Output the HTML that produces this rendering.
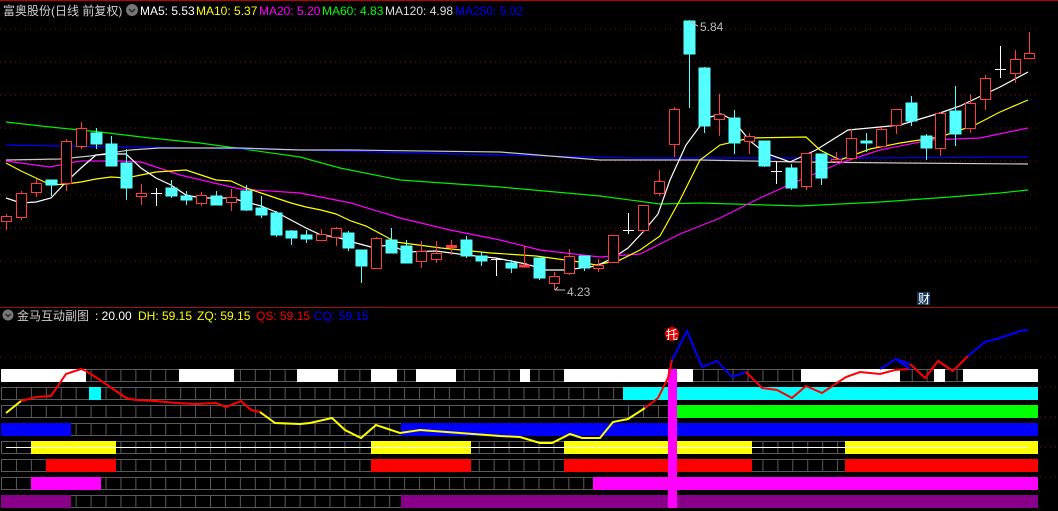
<!DOCTYPE html><html><head><meta charset="utf-8"><style>
html,body{margin:0;padding:0;background:#000;width:1058px;height:511px;overflow:hidden}
svg{display:block}
text{font-family:"Liberation Sans","Noto Sans CJK SC",sans-serif;font-size:12px}
</style></head><body>
<svg width="1058" height="511" viewBox="0 0 1058 511">
<defs>
<pattern id="cell" patternUnits="userSpaceOnUse" x="1" y="0" width="14.93" height="511">
<rect x="0.5" y="0" width="14.43" height="511" fill="#000"/>
<line x1="0.5" y1="0" x2="0.5" y2="511" stroke="#5a5a5a"/>
</pattern>
</defs>
<rect width="1058" height="511" fill="#000"/>
<line x1="0" y1="0.5" x2="1058" y2="0.5" stroke="#b00"/>
<g stroke="#8a1010" stroke-dasharray="1 4">
<line x1="0" y1="29" x2="1040" y2="29"/><line x1="0" y1="62" x2="1040" y2="62"/><line x1="0" y1="95" x2="1040" y2="95"/><line x1="0" y1="128" x2="1040" y2="128"/><line x1="0" y1="161" x2="1040" y2="161"/><line x1="0" y1="195" x2="1040" y2="195"/><line x1="0" y1="228" x2="1040" y2="228"/><line x1="0" y1="261" x2="1040" y2="261"/>
<line x1="0" y1="357" x2="1058" y2="357"/><line x1="1040" y1="387" x2="1058" y2="387"/><line x1="1040" y1="417" x2="1058" y2="417"/><line x1="1040" y1="447" x2="1058" y2="447"/><line x1="1040" y1="477" x2="1058" y2="477"/>
</g>
<line x1="0" y1="307.5" x2="1058" y2="307.5" stroke="#a01010"/>

<!-- header -->
<text x="3" y="15" fill="#d0d0d0" font-size="13">富奥股份(日线 前复权)</text>
<circle cx="132" cy="10" r="6" fill="#777"/><path d="M129 9 l3 3 l3 -3" stroke="#222" fill="none" stroke-width="1.3"/>
<text x="140" y="15" fill="#fff">MA5: 5.53</text>
<text x="196" y="15" fill="#ffff00">MA10: 5.37</text>
<text x="259" y="15" fill="#ff00ff">MA20: 5.20</text>
<text x="322" y="15" fill="#00ff00">MA60: 4.83</text>
<text x="385" y="15" fill="#ddd">MA120: 4.98</text>
<text x="455" y="15" fill="#0000ff">MA250: 5.02</text>

<!-- MA lines -->
<g fill="none" stroke-width="1.2">
<polyline stroke="#00ee00" points="6,122 50,127 100,132 150,138 200,143 250,150 300,157 340,168 400,180 500,187 600,196 660,204 700,203 800,206 880,202 950,197 1000,193 1028,190"/>
<polyline stroke="#0000ff" points="6,145 60,146 200,148 300,150 500,155 640,158 860,158 1028,157"/>
<polyline stroke="#c8c8c8" points="6,160 60,159 90,156 130,150 160,148 240,148 300,150 350,150 500,152 600,160 700,160 800,162 900,163 1028,164"/>
<polyline stroke="#ff00ff" points="6,161 50,167 80,161 120,161 141,162 180,175 240,189 300,193 351,203 400,218 450,230 500,240 540,250 600,257 640,254 680,234 720,218 760,198 800,180 840,163 880,150 930,140 980,138 1028,128"/>
<polyline stroke="#ffff00" points="6,163 21,171 36,178 51,185 66,184 81,182 96,179 111,177 126,178 141,175 156,172 171,171 186,170 201,175 216,180 231,181 246,188 261,193 276,198 291,203 306,207 321,210 336,214 351,221 366,226 396,242 441,248 491,253 536,256 580,262 596,265 620,260 640,250 660,236 680,200 700,160 720,145 750,138 806,137 820,150 840,160 870,149 900,143 940,137 975,125 1000,112 1028,100"/>
<polyline stroke="#ffffff" points="6,198 21,203 36,202 51,198 66,182 81,168 96,155 111,154 126,154 141,168 156,178 171,185 186,195 201,198 231,198 246,202 261,206 276,212 291,220 306,228 321,235 336,237 356,243 371,247 391,245 406,252 436,251 466,255 496,258 526,264 546,270 566,270 596,266 613,258 628,248 643,232 658,214 670,180 686,145 700,126 710,117 721,114 733,120 750,141 765,153 790,162 816,150 848,130 880,127 900,125 940,113 960,106 1000,87 1028,72"/>
</g>

<!-- candles: red hollow -->
<g stroke="#ff3c3c" fill="#000" stroke-width="1">
<line x1="6.5" y1="214" x2="6.5" y2="230"/><rect x="1.5" y="216.5" width="10" height="5"/>
<line x1="21.5" y1="191" x2="21.5" y2="220"/><rect x="16.5" y="193.5" width="10" height="24"/>
<line x1="36.5" y1="179" x2="36.5" y2="197"/><rect x="31.5" y="183.5" width="10" height="9"/>
<line x1="66.5" y1="139" x2="66.5" y2="191"/><rect x="61.5" y="141.5" width="10" height="42"/>
<line x1="81.5" y1="122" x2="81.5" y2="149"/><rect x="76.5" y="128.5" width="10" height="18"/>
<line x1="141.5" y1="184" x2="141.5" y2="205"/><rect x="136.5" y="193.5" width="10" height="3"/>
<line x1="201.5" y1="192" x2="201.5" y2="206"/><rect x="196.5" y="195.5" width="10" height="8"/>
<line x1="231.5" y1="189" x2="231.5" y2="211"/><rect x="226.5" y="197.5" width="10" height="5"/>
<line x1="321.5" y1="229" x2="321.5" y2="241"/><rect x="316.5" y="234.5" width="10" height="6"/>
<line x1="336.5" y1="227" x2="336.5" y2="246"/><rect x="331.5" y="228.5" width="10" height="9"/>
<line x1="376.5" y1="237" x2="376.5" y2="268"/><rect x="371.5" y="238.5" width="10" height="30"/>
<line x1="421.5" y1="241" x2="421.5" y2="268"/><rect x="416.5" y="251.5" width="10" height="10"/>
<line x1="436.5" y1="241" x2="436.5" y2="263"/><rect x="431.5" y="253.5" width="10" height="6"/>
<line x1="451.5" y1="240" x2="451.5" y2="255"/><rect x="446.5" y="245.5" width="10" height="2" fill="#ff3c3c"/>
<line x1="524.5" y1="246" x2="524.5" y2="268"/><rect x="519.5" y="265" width="10" height="2" fill="#ff3c3c"/>
<line x1="554.5" y1="272" x2="554.5" y2="290"/><rect x="549.5" y="276.5" width="10" height="7"/>
<line x1="569.5" y1="249" x2="569.5" y2="275"/><rect x="564.5" y="256.5" width="10" height="17"/>
<line x1="598.5" y1="259" x2="598.5" y2="272"/><rect x="593.5" y="265.5" width="10" height="3"/>
<rect x="608.5" y="235.5" width="10" height="27"/>
<line x1="643.5" y1="205" x2="643.5" y2="232"/><rect x="638.5" y="205.5" width="10" height="25"/>
<line x1="659.5" y1="170" x2="659.5" y2="196"/><rect x="654.5" y="181.5" width="10" height="12"/>
<line x1="674.5" y1="107" x2="674.5" y2="157"/><rect x="669.5" y="109.5" width="10" height="35"/>
<line x1="719.5" y1="94" x2="719.5" y2="136"/><rect x="714.5" y="114.5" width="10" height="5"/>
<line x1="749.5" y1="133" x2="749.5" y2="154"/><rect x="744.5" y="136.5" width="10" height="5"/>
<line x1="806.5" y1="153" x2="806.5" y2="190"/><rect x="801.5" y="153.5" width="10" height="33"/>
<line x1="836.5" y1="152" x2="836.5" y2="163"/><rect x="831.5" y="159.5" width="10" height="2"/>
<line x1="851.5" y1="129" x2="851.5" y2="160"/><rect x="846.5" y="138.5" width="10" height="20"/>
<line x1="881.5" y1="127" x2="881.5" y2="147"/><rect x="876.5" y="129.5" width="10" height="17"/>
<line x1="896.5" y1="109" x2="896.5" y2="134"/><rect x="891.5" y="109.5" width="10" height="16"/>
<line x1="940.5" y1="112" x2="940.5" y2="156"/><rect x="935.5" y="113.5" width="10" height="35"/>
<line x1="970.5" y1="94" x2="970.5" y2="133"/><rect x="965.5" y="103.5" width="10" height="25"/>
<line x1="985.5" y1="75" x2="985.5" y2="110"/><rect x="980.5" y="78.5" width="10" height="21"/>
<line x1="1015.5" y1="50" x2="1015.5" y2="83"/><rect x="1010.5" y="59.5" width="10" height="14"/>
<line x1="1029.5" y1="32" x2="1029.5" y2="58"/><rect x="1024.5" y="53.5" width="10" height="5"/>
</g>
<!-- cyan -->
<g fill="#54ffff" stroke="#54ffff">
<line x1="51.5" y1="180" x2="51.5" y2="196"/><rect x="46" y="180" width="11" height="5"/>
<line x1="96.5" y1="128" x2="96.5" y2="149"/><rect x="91" y="133" width="11" height="11"/>
<line x1="111.5" y1="136" x2="111.5" y2="166"/><rect x="106" y="144" width="11" height="22"/>
<line x1="126.5" y1="149" x2="126.5" y2="200"/><rect x="121" y="163" width="11" height="25"/>
<line x1="171.5" y1="180" x2="171.5" y2="198"/><rect x="166" y="188" width="11" height="8"/>
<line x1="186.5" y1="191" x2="186.5" y2="205"/><rect x="181" y="196" width="11" height="4"/>
<line x1="216.5" y1="191" x2="216.5" y2="205"/><rect x="211" y="196" width="11" height="9"/>
<line x1="246.5" y1="185" x2="246.5" y2="211"/><rect x="241" y="191" width="11" height="19"/>
<line x1="261.5" y1="196" x2="261.5" y2="218"/><rect x="256" y="208" width="11" height="7"/>
<line x1="276.5" y1="211" x2="276.5" y2="237"/><rect x="271" y="213" width="11" height="22"/>
<line x1="291.5" y1="230" x2="291.5" y2="245"/><rect x="286" y="231" width="11" height="7"/>
<line x1="306.5" y1="230" x2="306.5" y2="243"/><rect x="301" y="235" width="11" height="4"/>
<line x1="348.5" y1="231" x2="348.5" y2="251"/><rect x="343" y="233" width="11" height="15"/>
<line x1="361.5" y1="250" x2="361.5" y2="283"/><rect x="356" y="250" width="11" height="16"/>
<line x1="391.5" y1="228" x2="391.5" y2="253"/><rect x="386" y="240" width="11" height="13"/>
<line x1="406.5" y1="240" x2="406.5" y2="263"/><rect x="401" y="246" width="11" height="17"/>
<line x1="466.5" y1="236" x2="466.5" y2="258"/><rect x="461" y="240" width="11" height="16"/>
<line x1="481.5" y1="252" x2="481.5" y2="266"/><rect x="476" y="256" width="11" height="5"/>
<line x1="511.5" y1="260" x2="511.5" y2="273"/><rect x="506" y="263" width="11" height="5"/>
<line x1="539.5" y1="258" x2="539.5" y2="280"/><rect x="534" y="258" width="11" height="20"/>
<line x1="584.5" y1="256" x2="584.5" y2="271"/><rect x="579" y="256" width="11" height="12"/>
<line x1="689.5" y1="20" x2="689.5" y2="108"/><rect x="684" y="21" width="11" height="33"/>
<line x1="704.5" y1="67" x2="704.5" y2="133"/><rect x="699" y="68" width="11" height="58"/>
<line x1="734.5" y1="110" x2="734.5" y2="154"/><rect x="729" y="118" width="11" height="25"/>
<line x1="764.5" y1="141" x2="764.5" y2="167"/><rect x="759" y="141" width="11" height="25"/>
<line x1="791.5" y1="164" x2="791.5" y2="190"/><rect x="786" y="168" width="11" height="20"/>
<line x1="821.5" y1="154" x2="821.5" y2="185"/><rect x="816" y="154" width="11" height="24"/>
<line x1="866.5" y1="133" x2="866.5" y2="152"/><rect x="861" y="141" width="11" height="2"/>
<line x1="911.5" y1="96" x2="911.5" y2="126"/><rect x="906" y="103" width="11" height="18"/>
<line x1="926.5" y1="134" x2="926.5" y2="160"/><rect x="921" y="136" width="11" height="12"/>
<line x1="955.5" y1="86" x2="955.5" y2="146"/><rect x="950" y="111" width="11" height="23"/>
</g>
<!-- white crosses -->
<g stroke="#fff">
<line x1="156.5" y1="188" x2="156.5" y2="206"/><line x1="151" y1="193.5" x2="162" y2="193.5"/>
<line x1="496.5" y1="258" x2="496.5" y2="276"/><line x1="491" y1="259.5" x2="502" y2="259.5"/>
<line x1="628.5" y1="213" x2="628.5" y2="234"/><line x1="623" y1="230.5" x2="634" y2="230.5"/>
<line x1="776.5" y1="161" x2="776.5" y2="184"/><line x1="771" y1="171.5" x2="782" y2="171.5"/>
<line x1="1000.5" y1="46" x2="1000.5" y2="78"/><line x1="995" y1="69.5" x2="1006" y2="69.5"/>
</g>
<text x="700" y="31" fill="#bbb">5.84</text><path d="M690 22 l8 4" stroke="#bbb"/>
<text x="567" y="296" fill="#bbb">4.23</text><path d="M555 290 h10 M555 290 l3 -3" stroke="#bbb" fill="none"/>
<rect x="917" y="292" width="13" height="13" fill="#1a3a5a"/><text x="918" y="303" fill="#fff" font-size="11">财</text>

<!-- sub header -->
<circle cx="8" cy="315" r="5.5" fill="#777"/><path d="M5.5 314 l2.5 2.5 l2.5 -2.5" stroke="#222" fill="none" stroke-width="1.3"/>
<text x="17" y="320" fill="#ccc" font-size="13">金马互动副图</text>
<text x="95" y="320" fill="#fff">: 20.00</text>
<text x="138" y="320" fill="#ffff00">DH: 59.15</text>
<text x="197" y="320" fill="#ffff00">ZQ: 59.15</text>
<text x="256" y="320" fill="#ff0000">QS: 59.15</text>
<text x="314" y="320" fill="#0000ff">CQ: 59.15</text>

<!-- grid rows -->
<g fill="url(#cell)" stroke="#5a5a5a">
<rect x="1.5" y="369.5" width="1036" height="12"/>
<rect x="1.5" y="387.5" width="1036" height="12"/>
<rect x="1.5" y="405.5" width="1036" height="12"/>
<rect x="1.5" y="423.5" width="1036" height="12"/>
<rect x="1.5" y="441.5" width="1036" height="12"/>
<rect x="1.5" y="459.5" width="1036" height="12"/>
<rect x="1.5" y="477.5" width="1036" height="12"/>
<rect x="1.5" y="495.5" width="1036" height="12"/>
</g>
<g>
<g fill="#fff"><rect x="1" y="369" width="85" height="13"/><rect x="179" y="369" width="55" height="13"/><rect x="297" y="369" width="41" height="13"/><rect x="371" y="369" width="26" height="13"/><rect x="416" y="369" width="40" height="13"/><rect x="520" y="369" width="10" height="13"/><rect x="564" y="369" width="129" height="13"/><rect x="801" y="369" width="99" height="13"/><rect x="934" y="369" width="11" height="13"/><rect x="963" y="369" width="75" height="13"/></g>
<g fill="#00ffff"><rect x="89" y="387" width="12" height="13"/><rect x="623" y="387" width="415" height="13"/></g>
<rect x="677" y="405" width="361" height="13" fill="#00ff00"/>
<g fill="#0000ff"><rect x="1" y="423" width="70" height="13"/><rect x="401" y="423" width="637" height="13"/></g>
<g fill="#ffff00"><rect x="31" y="441" width="85" height="13"/><rect x="371" y="441" width="100" height="13"/><rect x="564" y="441" width="188" height="13"/><rect x="845" y="441" width="193" height="13"/></g>
<line x1="6" y1="447.5" x2="1028" y2="447.5" stroke="#fff"/>
<g fill="#ff0000"><rect x="46" y="459" width="70" height="13"/><rect x="371" y="459" width="100" height="13"/><rect x="564" y="459" width="188" height="13"/><rect x="845" y="459" width="193" height="13"/></g>
<g fill="#ff00ff"><rect x="31" y="477" width="70" height="13"/><rect x="593" y="477" width="445" height="13"/></g>
<g fill="#880088"><rect x="1" y="495" width="70" height="13"/><rect x="401" y="495" width="637" height="13"/></g>
<rect x="668" y="369" width="9" height="139" fill="#ff00ff"/>
</g>

<!-- sub lines -->
<g fill="none" stroke-width="2">
<polyline stroke="#ffff00" points="6,413 21,401"/>
<polyline stroke="#ff0000" points="21,401 36,397 51,396 66,374 81,369 86,371 100,380 126,398 136,400 156,401 176,403 196,404 216,403 226,407 241,401 251,410 260,412"/>
<polyline stroke="#ffff00" points="260,412 275,423 300,424 310,423 332,418 345,430 361,438 376,425 400,433 420,430 460,433 500,436 520,437 540,443 552,443 570,434 582,438 600,438 613,422 628,419 645,408"/>
<polyline stroke="#ff0000" points="645,408 658,398 668,378 672,360"/>
<polyline stroke="#0000ff" points="672,360 687,331 702,367 717,361 732,377 746,372"/>
<polyline stroke="#ff0000" points="746,372 762,388 777,390 792,398 806,386 822,393 846,377 860,372 880,374 895,370 910,369"/>
<polyline stroke="#0000ff" points="910,369 896,359 910,364" />
<polyline stroke="#0000ff" points="880,369 896,359 910,364"/>
<polyline stroke="#ff0000" points="910,364 925,378 938,361 953,371 968,356"/>
<polyline stroke="#0000ff" points="968,356 985,342 1000,338 1020,331 1028,330"/>
</g>
<circle cx="672" cy="334" r="7" fill="#e00000"/><text x="666" y="339" fill="#fff" font-size="11">托</text>
</svg>
</body></html>
